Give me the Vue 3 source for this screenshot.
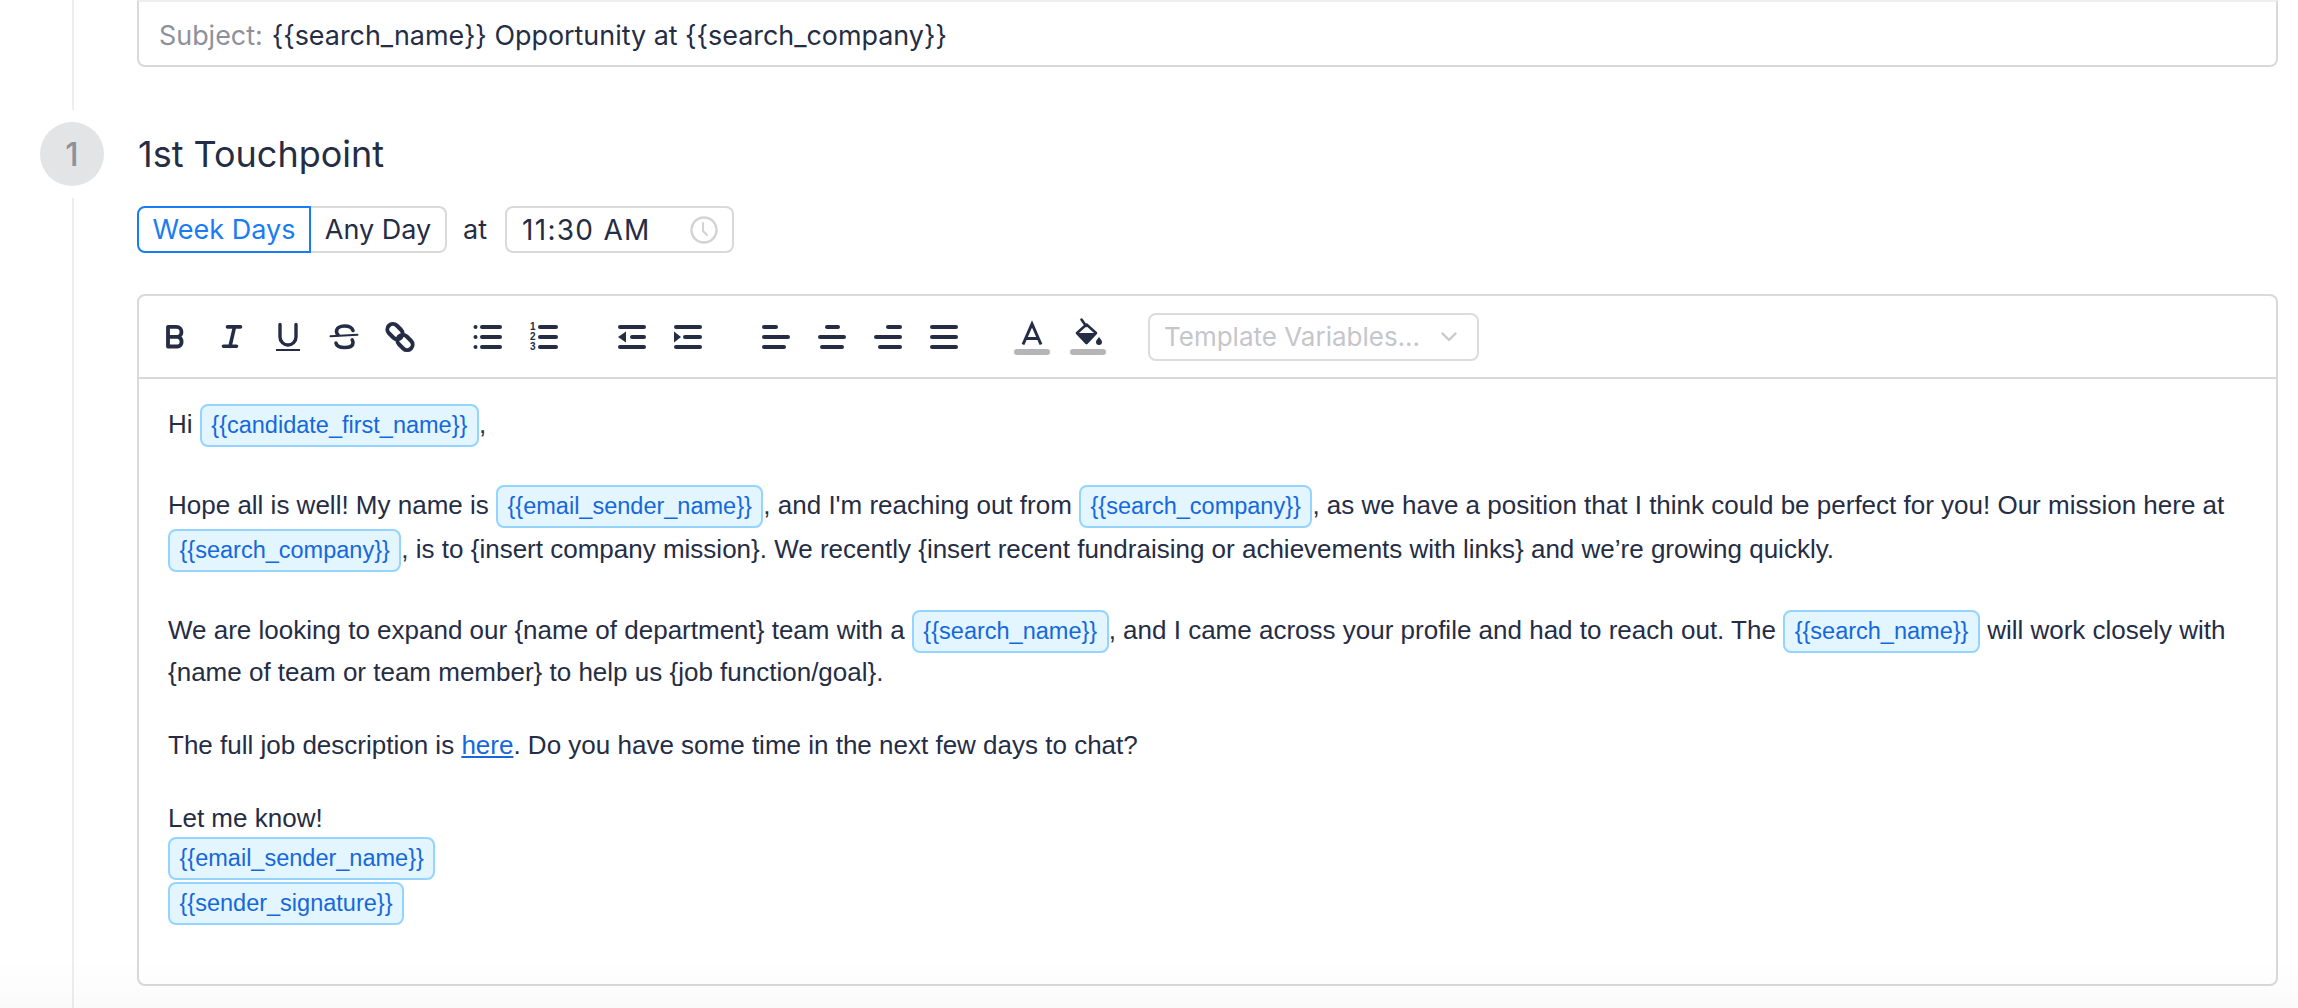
<script setup>
</script>

<template>
  <div class="page">
    <div class="row subject-row">
      <div class="rail"><span class="line"></span></div>
      <div class="subject-box">
        <span class="subject-label">Subject:</span>
        <span class="subject-text" v-pre>{{search_name}} Opportunity at {{search_company}}</span>
      </div>
    </div>

    <div class="row head-row">
      <div class="rail rail-head"><span class="circle">1</span></div>
      <h2 class="title">1st Touchpoint</h2>
    </div>

    <div class="row body-row">
      <div class="rail"><span class="line"></span></div>
      <div class="content">
        <div class="schedule">
          <div class="seg">
            <span class="seg-btn active">Week Days</span>
            <span class="seg-btn">Any Day</span>
          </div>
          <span class="at">at</span>
          <div class="time">
            <span class="time-text">11:30 AM</span>
            <svg class="clock" viewBox="0 0 28 28" fill="none" stroke="#d2d3d7" stroke-width="2.4" stroke-linecap="round" stroke-linejoin="round">
              <circle cx="14" cy="14" r="12.5" />
              <path d="M13 7v8l4 4" stroke-width="2" />
            </svg>
          </div>
        </div>

        <div class="editor">
          <div class="toolbar">
            <div class="tool-group">
              <svg class="ic" viewBox="0 0 32 32" fill="none" stroke="#252d45" stroke-width="3.8" stroke-linejoin="round"><path d="M8 5.900h8.500a5 5 0 0 1 0 10H8zM8 15.900h10a5 5 0 0 1 0 9.600H8z" /></svg>
              <svg class="ic" viewBox="0 0 32 32" fill="none" stroke="#252d45" stroke-width="3.6" stroke-linecap="round"><path d="M11.500 5.900h13M7.500 25.300h13M18.500 5.900l-4.500 19.400" /></svg>
              <svg class="ic" viewBox="0 0 32 32" fill="none" stroke="#252d45" stroke-width="3.4" stroke-linecap="round"><path d="M8 3.500v12.500a8 8 0 0 0 16 0V3.500" /><path d="M4 29h24" stroke-width="2" stroke-linecap="butt" /></svg>
              <svg class="ic" viewBox="0 0 32 32" fill="none" stroke="#252d45" stroke-width="3.6" stroke-linecap="round"><path d="M25 9.500c-1-3-4-4.500-8.500-4.500S8.500 7 8.500 10.500c0 1.500.5 2.500 1.500 3.200M24.200 19c.6.800.8 1.700.8 2.700 0 3.300-4 4.800-8.500 4.800S8.500 25 8 22" /><path d="M2.500 15.300L29.500 13.800" stroke-width="2" /></svg>
              <svg class="ic" viewBox="0 0 32 32" fill="none" stroke="#252d45" stroke-width="4"><rect x="2.500" y="5" width="17" height="11" rx="5.500" transform="rotate(45 11 10.500)" /><rect x="12.500" y="16" width="17" height="11" rx="5.500" transform="rotate(45 21 21.500)" /></svg>
            </div>
            <div class="tool-group">
              <svg class="ic" viewBox="0 0 32 32" fill="#252d45"><circle cx="3.500" cy="6" r="2" /><circle cx="3.500" cy="16" r="2" /><circle cx="3.500" cy="26" r="2" /><rect x="8" y="4" width="22" height="4" rx="2" /><rect x="8" y="14" width="22" height="4" rx="2" /><rect x="8" y="24" width="22" height="4" rx="2" /></svg>
              <svg class="ic" viewBox="0 0 32 32" fill="#252d45"><text class="num" x="2" y="9">1</text><text class="num" x="2" y="19">2</text><text class="num" x="2" y="29">3</text><rect x="10" y="4" width="20" height="4" rx="2" /><rect x="10" y="14" width="20" height="4" rx="2" /><rect x="10" y="24" width="20" height="4" rx="2" /></svg>
            </div>
            <div class="tool-group">
              <svg class="ic" viewBox="0 0 32 32" fill="#252d45"><rect x="2" y="4" width="28" height="4" rx="2" /><rect x="14" y="14" width="16" height="4" rx="2" /><rect x="2" y="24" width="28" height="4" rx="2" /><path d="M2 16l8-5.500v11z" /></svg>
              <svg class="ic" viewBox="0 0 32 32" fill="#252d45"><rect x="2" y="4" width="28" height="4" rx="2" /><rect x="11" y="14" width="19" height="4" rx="2" /><rect x="2" y="24" width="28" height="4" rx="2" /><path d="M2 10.500l7 5.500-7 5.500z" /></svg>
            </div>
            <div class="tool-group">
              <svg class="ic" viewBox="0 0 32 32" fill="#252d45"><rect x="2" y="4" width="16" height="4" rx="2" /><rect x="2" y="14" width="28" height="4" rx="2" /><rect x="2" y="24" width="24" height="4" rx="2" /></svg>
              <svg class="ic" viewBox="0 0 32 32" fill="#252d45"><rect x="9" y="4" width="15" height="4" rx="2" /><rect x="2" y="14" width="28" height="4" rx="2" /><rect x="4" y="24" width="24" height="4" rx="2" /></svg>
              <svg class="ic" viewBox="0 0 32 32" fill="#252d45"><rect x="14" y="4" width="16" height="4" rx="2" /><rect x="2" y="14" width="28" height="4" rx="2" /><rect x="6" y="24" width="24" height="4" rx="2" /></svg>
              <svg class="ic" viewBox="0 0 32 32" fill="#252d45"><rect x="2" y="4" width="28" height="4" rx="2" /><rect x="2" y="14" width="28" height="4" rx="2" /><rect x="2" y="24" width="28" height="4" rx="2" /></svg>
            </div>
            <div class="color-group">
              <svg class="ic-wide" viewBox="0 0 36 32" fill="none" stroke="#252d45" stroke-width="3"><path d="M9 23.500L18 3l9 20.500M11.500 17.500h13" /><rect x="0" y="28" width="36" height="6" rx="3" fill="#b5b5b7" stroke="none" /></svg>
              <svg class="ic-wide" viewBox="0 0 36 32" fill="none" stroke="#252d45" stroke-width="2.6" stroke-linejoin="round"><path d="M11.500-1.500L16 5" stroke-linecap="round" /><path d="M16.500 3.500L26 12 16.500 22 7 12z" /><path d="M6 12h21l-10.500 11z" fill="#252d45" stroke="none" /><path d="M29 16c1.500 2 3 3.500 3 5a3 3 0 0 1-6 0c0-1.500 1.500-3 3-5z" fill="#252d45" stroke="none" /><rect x="0" y="28" width="36" height="6" rx="3" fill="#b5b5b7" stroke="none" /></svg>
            </div>
            <div class="select">
              <span>Template Variables...</span>
              <svg class="chev" viewBox="0 0 16 10" fill="none" stroke="#c8c9ce" stroke-width="2.4" stroke-linecap="round" stroke-linejoin="round"><path d="M1.500 1.500L8 8l6.500-6.500" /></svg>
            </div>
          </div>

          <div class="body">
            <p>Hi <span class="chip" v-pre>{{candidate_first_name}}</span>,</p>
            <p>Hope all is well! My name is <span class="chip" v-pre>{{email_sender_name}}</span>, and I'm reaching out from <span class="chip" v-pre>{{search_company}}</span>, as we have a position that I think could be perfect for you! Our mission here at <span class="chip" v-pre>{{search_company}}</span>, is to {insert company mission}. We recently {insert recent fundraising or achievements with links} and we’re growing quickly.</p>
            <p>We are looking to expand our {name of department} team with a <span class="chip" v-pre>{{search_name}}</span>, and I came across your profile and had to reach out. The <span class="chip" v-pre>{{search_name}}</span> will work closely with {name of team or team member} to help us {job function/goal}.</p>
            <p>The full job description is <a class="link">here</a>. Do you have some time in the next few days to chat?</p>
            <p>Let me know!<br /><span class="chip sig" v-pre>{{email_sender_name}}</span><br /><span class="chip sig" v-pre>{{sender_signature}}</span></p>
          </div>
        </div>
      </div>
    </div>
    <div class="fade"></div>
  </div>
</template>

<style scoped>
.page {
  position: relative;
  width: 2298px;
  height: 1008px;
  overflow: hidden;
  background: #fff;
  font-family: Inter, "Liberation Sans", sans-serif;
  color: #252d45;
}
.row {
  display: flex;
}
.rail {
  flex: 0 0 137px;
  display: flex;
  flex-direction: column;
  padding-left: 72px;
  box-sizing: border-box;
}
.line {
  flex: 1;
  width: 2px;
  background: #eeeeee;
}
.subject-row {
  height: 110px;
}
.subject-box {
  flex: 0 0 2141px;
  height: 67px;
  box-sizing: border-box;
  border: 2px solid #d9d9d9;
  border-top-color: #efefef;
  border-radius: 0 0 8px 8px;
  padding: 2px 19px 0 20px;
  display: flex;
  align-items: center;
  gap: 9px;
  font-size: 26.9px;
}
.subject-label {
  color: #8e919c;
}
.head-row {
  height: 88px;
  align-items: center;
}
.rail-head {
  padding-left: 40px;
}
.circle {
  width: 64px;
  height: 64px;
  border-radius: 50%;
  background: #e3e4e6;
  color: #8e919c;
  font-size: 32px;
  font-weight: 500;
  display: flex;
  align-items: center;
  justify-content: center;
}
.title {
  margin: 0 0 0 1px;
  font-size: 36px;
  font-weight: 400;
  color: #252d45;
}
.body-row {
  height: 810px;
}
.content {
  flex: 0 0 2141px;
  padding-top: 8px;
}
.schedule {
  display: flex;
  align-items: center;
  height: 47px;
  font-size: 27px;
}
.seg {
  display: flex;
  height: 47px;
}
.seg-btn {
  box-sizing: border-box;
  height: 47px;
  display: flex;
  align-items: center;
  justify-content: center;
  border: 2px solid #d9d9d9;
  border-left: 0;
  border-radius: 0 8px 8px 0;
  width: 136px;
}
.seg-btn.active {
  width: 174px;
  border: 2px solid #1a7cf2;
  border-radius: 8px 0 0 8px;
  color: #1a7cf2;
}
.at {
  margin: 0 18px 0 16px;
}
.time {
  box-sizing: border-box;
  width: 229px;
  height: 47px;
  border: 2px solid #d9d9d9;
  border-radius: 8px;
  padding: 0 14px 0 15px;
  display: flex;
  align-items: center;
  justify-content: space-between;
}
.time-text {
  font-size: 28px;
  letter-spacing: 1.3px;
}
.clock {
  width: 28px;
  height: 28px;
}
.editor {
  box-sizing: border-box;
  margin-top: 41px;
  height: 692px;
  border: 2px solid #d9d9d9;
  border-radius: 8px;
}
.toolbar {
  box-sizing: border-box;
  height: 83px;
  border-bottom: 2px solid #d9d9d9;
  padding-left: 21px;
  display: flex;
  align-items: center;
}
.tool-group {
  display: flex;
  gap: 24px;
  margin-right: 56px;
}
.color-group {
  display: flex;
  gap: 20px;
  margin-left: -2px;
  margin-right: 42px;
}
.ic {
  display: block;
  width: 32px;
  height: 32px;
  overflow: visible;
}
.ic-wide {
  display: block;
  width: 36px;
  height: 32px;
  overflow: visible;
}
.num {
  font-family: "Liberation Sans", sans-serif;
  font-size: 10px;
  font-weight: 700;
}
.select {
  box-sizing: border-box;
  width: 331px;
  height: 48px;
  border: 2px solid #dcdcdf;
  border-radius: 8px;
  padding: 0 20px 0 14px;
  display: flex;
  align-items: center;
  justify-content: space-between;
  color: #c5c6cc;
  font-size: 26px;
}
.chev {
  width: 16px;
  height: 10px;
}
.body {
  padding: 25px 20px 0 29px;
  font-family: "Liberation Sans", Arial, sans-serif;
  font-size: 26px;
  line-height: 36px;
  color: #252d45;
}
.body p {
  margin: 0 0 37px;
}
.chip {
  display: inline-block;
  box-sizing: border-box;
  height: 43px;
  line-height: 39px;
  padding: 0 9.5px;
  margin: 0 0 1px;
  border: 2px solid #94d4ff;
  border-radius: 8px;
  background: #e3f5ff;
  color: #1568dc;
  font-size: 23.5px;
  vertical-align: middle;
}
.chip.sig {
  margin: 1px 0;
}
.link {
  color: #1568dc;
  text-decoration: underline;
}
.fade {
  position: absolute;
  left: 0;
  right: 0;
  bottom: 0;
  height: 48px;
  background: linear-gradient(to bottom, rgba(0, 0, 0, 0), rgba(0, 0, 0, 0.02));
  pointer-events: none;
}
</style>
